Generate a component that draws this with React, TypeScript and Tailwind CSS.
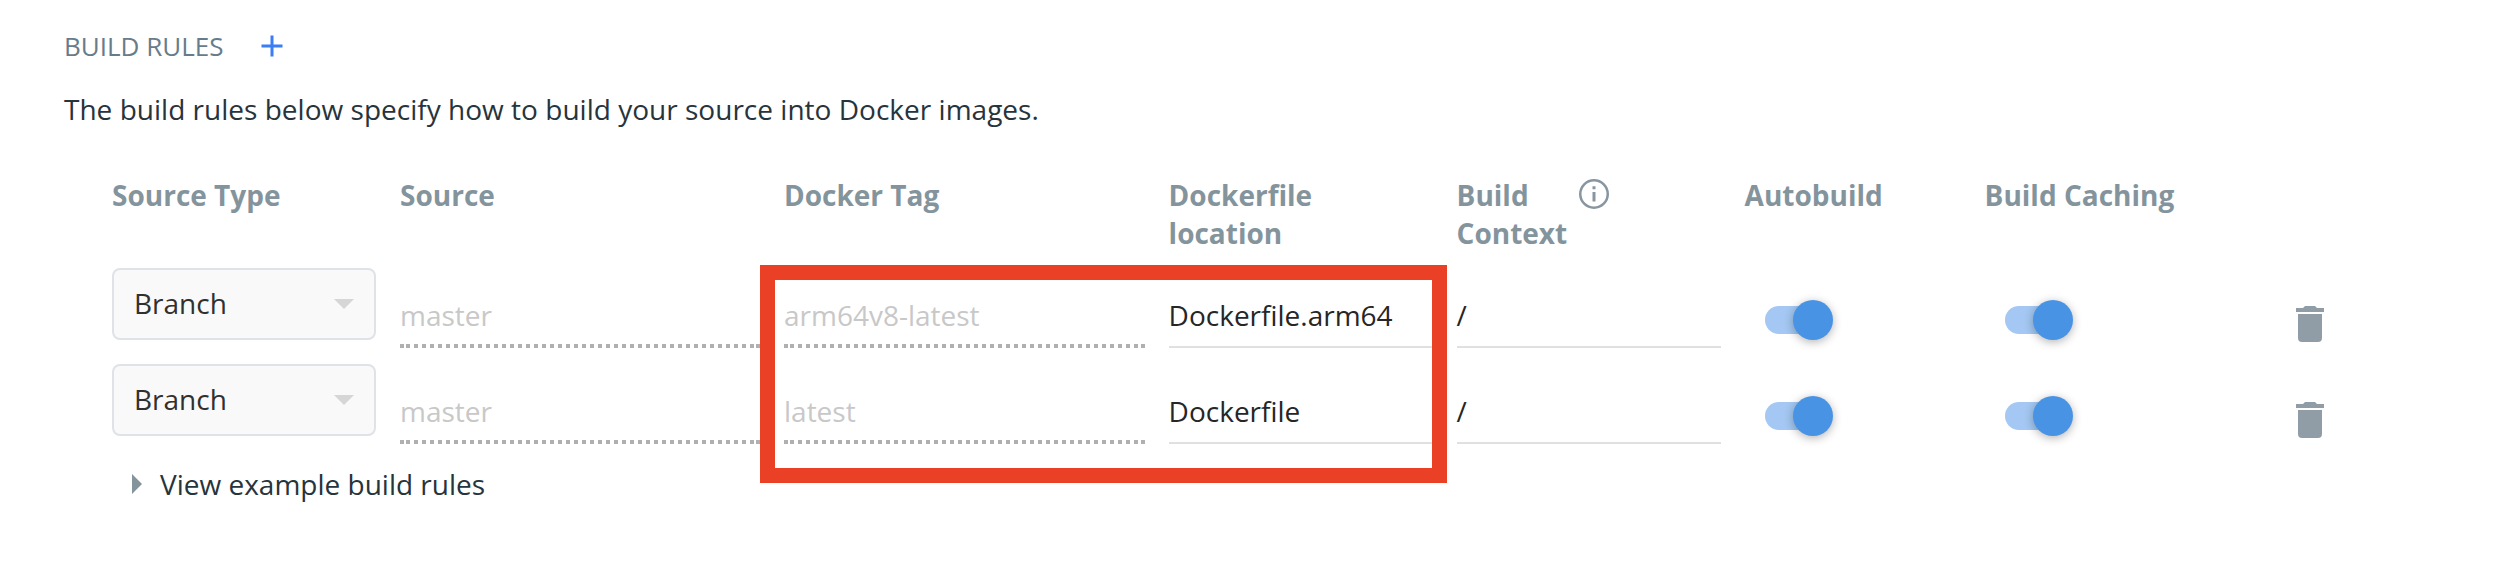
const dottedRule =
  "h-1 bg-[linear-gradient(90deg,#b0b0b0_4px,transparent_4px),repeating-linear-gradient(90deg,#b0b0b0_0_4px,transparent_4px_8px),linear-gradient(#b0b0b0,#b0b0b0)] bg-no-repeat [background-size:6px_4px,348px_4px,4px_4px] [background-position:0_0,6px_0,100%_0]";

const rules = [
  { source: "master", tag: "arm64v8-latest", file: "Dockerfile.arm64", context: "/" },
  { source: "master", tag: "latest", file: "Dockerfile", context: "/" },
];

const columns = "grid grid-cols-[264px_360px_360.6px_264px_264px_216px_264px_1fr] gap-x-6";

function Plus() {
  return (
    <svg className="h-[22px] w-[22px]" viewBox="0 0 22 22" fill="#3b7cf7">
      <path d="M9.5 0.5h3v9H21.5v3h-9v9h-3v-9H0.5v-3h9z" />
    </svg>
  );
}

function Info() {
  return (
    <svg className="mt-[3px] h-[30px] w-[30px]" viewBox="0 0 30 30" fill="none" stroke="#8796a1">
      <circle cx="15" cy="15" r="13.75" strokeWidth="2.5" />
      <path d="M15 13v9.5M15 7.3v3" strokeWidth="3" />
    </svg>
  );
}

function Trash() {
  return (
    <svg className="h-9 w-7" viewBox="0 0 28 36" fill="#919da6">
      <path d="M0 2h7l2-2h10l2 2h7v4H0zM2 8h24v24a4 4 0 0 1-4 4H6a4 4 0 0 1-4-4z" />
    </svg>
  );
}

function Toggle() {
  return (
    <div className="ml-5 mt-[32px] flex h-10 w-[68px] items-center">
      <div className="h-7 w-12 rounded-l-full bg-[#a4c8f3]" />
      <div className="-ml-5 h-10 w-10 shrink-0 rounded-full bg-[#4993e5] shadow-[0_2px_10px_rgba(0,0,0,0.3)]" />
    </div>
  );
}

function DottedField({ text }: { text: string }) {
  return (
    <div className="pt-6">
      <div className="h-[52px] leading-[46px] text-[#c8c8c8]">{text}</div>
      <div className={dottedRule} />
    </div>
  );
}

function LineField({ text }: { text: string }) {
  return (
    <div className="h-20 border-b-2 border-[#e0e0e0] pt-6 leading-[46px] text-[#262626]">{text}</div>
  );
}

export default function App() {
  return (
    <main className="relative h-[568px] w-[2504px] overflow-hidden bg-white pl-16 pt-6 font-['Open_Sans',sans-serif] text-[28px] text-[#27343c]">
      <div className="flex h-11 items-center">
        <h2 className="w-[197px] text-[26px] leading-[44px] text-[#677c8b]">BUILD RULES</h2>
        <Plus />
      </div>
      <p className="mt-[22px] leading-[38px] tracking-[0.015px]">The build rules below specify how to build your source into Docker images.</p>

      <div className="ml-12 mt-[48px]">
        <div className={`${columns} h-[92px] font-bold leading-[38px] text-[#84949d]`}>
          <div>Source Type</div>
          <div>Source</div>
          <div>Docker Tag</div>
          <div>Dockerfile<br />location</div>
          <div className="flex">
            <div className="w-[122.4px]">Build<br />Context</div>
            <Info />
          </div>
          <div>Autobuild</div>
          <div>Build Caching</div>
        </div>
        {rules.map((rule) => (
          <div key={rule.tag} className={`${columns} h-24`}>
            <div className="flex h-[72px] items-center justify-between rounded-lg border-2 border-[#dfe3e7] bg-[#f9f9f9] pl-5 pr-5 text-[#303030]">
              <span className="-mt-0.5">Branch</span>
              <svg className="h-[10px] w-5" viewBox="0 0 20 10" fill="#d6d6d6"><path d="M0 0h20L10 10z" /></svg>
            </div>
            <DottedField text={rule.source} />
            <DottedField text={rule.tag} />
            <LineField text={rule.file} />
            <LineField text={rule.context} />
            <Toggle />
            <Toggle />
            <div className="ml-[23.4px] mt-[38px]"><Trash /></div>
          </div>
        ))}
      </div>
      <div className="ml-[68px] flex h-12 items-center">
        <svg className="h-5 w-[10px]" viewBox="0 0 10 20" fill="#84949d"><path d="M0 0l10 10L0 20z" /></svg>
        <span className="ml-[18px]">View example build rules</span>
      </div>
      <div className="absolute left-[760px] top-[265px] h-[218px] w-[687px] border-[15px] border-[#ea4025]" />
    </main>
  );
}
